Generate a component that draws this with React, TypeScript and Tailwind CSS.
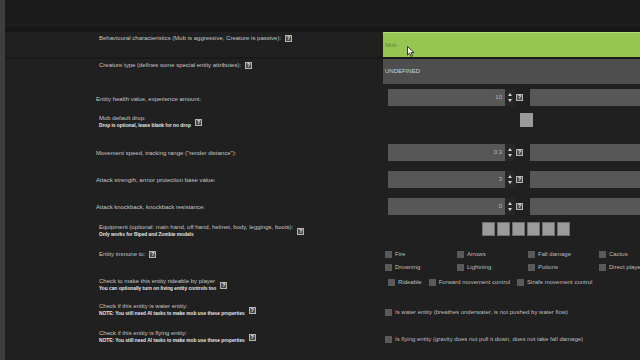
import type { ReactNode } from 'react'

function Help() {
  return (
    <span className="flex h-[7px] w-[7px] shrink-0 items-center justify-center border border-[#b5b5b5] bg-[#4a4a4a] text-[5px] font-bold leading-none text-white">
      ?
    </span>
  )
}

function Label({ text, sub, help }: { text: string; sub?: string; help?: boolean }) {
  return (
    <div className="flex items-center gap-[4px]">
      <div className="flex flex-col">
        <span className="text-[6px] leading-[7px] text-[#c4c4c4] whitespace-nowrap">{text}</span>
        {sub && (
          <span className="mt-[1px] text-[4.8px] font-bold leading-[6px] text-[#e6e6e6] whitespace-nowrap">
            {sub}
          </span>
        )}
      </div>
      {help && <Help />}
    </div>
  )
}

function Box() {
  return <span className="h-[7px] w-[7px] shrink-0 bg-[#5a5a5a]" />
}

function Check({ label }: { label: string }) {
  return (
    <div className="flex items-center gap-[3px]">
      <Box />
      <span className="text-[6px] leading-[7px] text-[#bdbdbd] whitespace-nowrap">{label}</span>
    </div>
  )
}

function Spinner() {
  return (
    <div className="flex h-full w-[10px] flex-col items-center justify-center gap-[3px] bg-[#262626]">
      <svg width="4" height="3" viewBox="0 0 4 3">
        <path d="M0 3 L2 0 L4 3 Z" fill="#d0d0d0" />
      </svg>
      <svg width="4" height="3" viewBox="0 0 4 3">
        <path d="M0 0 L2 3 L4 0 Z" fill="#d0d0d0" />
      </svg>
    </div>
  )
}

function NumberPair({ a, b }: { a: string; b?: string }) {
  return (
    <div className="flex h-[17px] items-center pl-[5px]">
      <div className="flex h-full w-[117px] items-center justify-end bg-[#575757] pr-[3px] text-[6px] text-[#b8b8b8]">
        {a}
      </div>
      <Spinner />
      <div className="ml-[1px] mr-[7px] flex h-full items-center">
        <Help />
      </div>
      <div className="flex h-full w-[140px] items-center justify-end bg-[#575757] pr-[3px] text-[6px] text-[#b8b8b8]">
        <span className="-mr-[30px]">{b}</span>
      </div>
    </div>
  )
}

function Row({
  h,
  mt = 0,
  label,
  control,
  labelPt = 0,
  controlPt = 0,
  center = false,
  labelPl = 94,
}: {
  h: number
  mt?: number
  label: ReactNode
  control: ReactNode
  labelPt?: number
  controlPt?: number
  center?: boolean
  labelPl?: number
}) {
  return (
    <div
      className="grid shrink-0 grid-cols-[378px_1fr]"
      style={{ height: h, marginTop: mt }}
    >
      <div
        className={center ? 'flex items-center' : 'flex items-start'}
        style={{ paddingTop: labelPt, paddingLeft: labelPl }}
      >
        {label}
      </div>
      <div className={center ? 'flex items-center' : 'flex items-start'} style={{ paddingTop: controlPt }}>
        {control}
      </div>
    </div>
  )
}

export default function App() {
  return (
    <div className="flex h-[360px] w-[640px] overflow-hidden bg-[#202020] font-['Liberation_Sans',Arial,sans-serif]">
      <div className="w-[5px] shrink-0 bg-[#3e3e3e]" />
      <div className="flex min-w-0 flex-1 flex-col">
        <div className="h-[27px] shrink-0 bg-[#1c1c1c]" />
        <div className="h-[5px] shrink-0 bg-[#171717]" />

        <Row
          h={25}
          labelPt={3}
          labelPl={94}
          label={<Label text="Behavioural characteristics (Mob is aggressive, Creature is passive):" help />}
          control={
            <div className="relative flex h-[25px] w-full items-center border-t border-[#b4dc78] bg-[#97c551] pl-[2px] text-[6px] text-[#5f8232]">
              Mob
              <svg className="absolute left-[24px] top-[13px]" width="8" height="11" viewBox="0 0 8 11">
                <path d="M0.5 0.5 L0.5 9 L2.6 7 L4 10.3 L5.4 9.7 L4 6.6 L7 6.6 Z" fill="#ffffff" stroke="#111" strokeWidth="0.8" />
              </svg>
            </div>
          }
        />
        <div className="h-[2px] shrink-0 bg-[#1a1a1a]" />
        <Row
          h={25}
          labelPt={3}
          label={<Label text="Creature type (defines some special entity attributes):" help />}
          control={
            <div className="flex h-[25px] w-full items-center bg-[#4e4e4e] pl-[2px] text-[6px] text-[#d2d2d2]">
              UNDEFINED
            </div>
          }
        />
        <Row
          h={27}
          center
          labelPl={91}
          labelPt={3}
          label={<Label text="Entity health value, experience amount:" />}
          control={<NumberPair a="10" />}
        />
        <Row
          h={20}
          labelPt={4}
          label={<Label text="Mob default drop:" sub="Drop is optional, leave blank for no drop" help />}
          control={
            <div className="ml-[137px] mt-[2px] h-[14px] w-[13px] bg-[#9b9b9b]" />
          }
        />
        <Row
          h={27}
          mt={8}
          center
          labelPl={91}
          labelPt={1}
          label={<Label text={'Movement speed, tracking range ("render distance"):'} />}
          control={<NumberPair a="0.3" b="6" />}
        />
        <Row
          h={27}
          center
          labelPl={91}
          labelPt={1}
          label={<Label text="Attack strength, armor protection base value:" />}
          control={<NumberPair a="3" />}
        />
        <Row
          h={27}
          center
          labelPl={91}
          labelPt={1}
          label={<Label text="Attack knockback, knockback resistance:" />}
          control={<NumberPair a="0" />}
        />
        <Row
          h={20}
          labelPt={4}
          label={
            <Label
              text="Equipment (optional: main hand, off hand, helmet, body, leggings, boots):"
              sub="Only works for Biped and Zombie models"
              help
            />
          }
          control={
            <div className="ml-[99px] mt-[2px] flex gap-[2px]">
              {[0, 1, 2, 3, 4, 5].map((i) => (
                <span key={i} className="h-[14px] w-[13px] border border-[#6e6e6e] bg-[#9b9b9b]" />
              ))}
            </div>
          }
        />
        <Row
          h={26}
          mt={8}
          labelPt={3}
          label={<Label text="Entity immune to:" help />}
          control={
            <div className="grid grid-cols-[72px_71px_71px_71px] grid-rows-[13px_13px] items-center pl-[2px]">
              <Check label="Fire" />
              <Check label="Arrows" />
              <Check label="Fall damage" />
              <Check label="Cactus" />
              <Check label="Drowning" />
              <Check label="Lightning" />
              <Check label="Potions" />
              <Check label="Direct player" />
            </div>
          }
        />
        <Row
          h={24}
          mt={2}
          labelPt={2}
          controlPt={3}
          label={
            <Label
              text="Check to make this entity rideable by player"
              sub="You can optionally turn on living entity controls too"
              help
            />
          }
          control={
            <div className="flex gap-[7px] pl-[5px]">
              <Check label="Rideable" />
              <Check label="Forward movement control" />
              <Check label="Strafe movement control" />
            </div>
          }
        />
        <Row
          h={27}
          mt={2}
          labelPt={1}
          controlPt={7}
          label={
            <Label
              text="Check if this entity is water entity:"
              sub="NOTE: You still need AI tasks to make mob use these properties"
              help
            />
          }
          control={
            <div className="pl-[2px]">
              <Check label="Is water entity (breathes underwater, is not pushed by water flow)" />
            </div>
          }
        />
        <Row
          h={27}
          labelPt={1}
          controlPt={7}
          label={
            <Label
              text="Check if this entity is flying entity:"
              sub="NOTE: You still need AI tasks to make mob use these properties"
              help
            />
          }
          control={
            <div className="pl-[2px]">
              <Check label="Is flying entity (gravity does not pull it down, does not take fall damage)" />
            </div>
          }
        />
      </div>
    </div>
  )
}
